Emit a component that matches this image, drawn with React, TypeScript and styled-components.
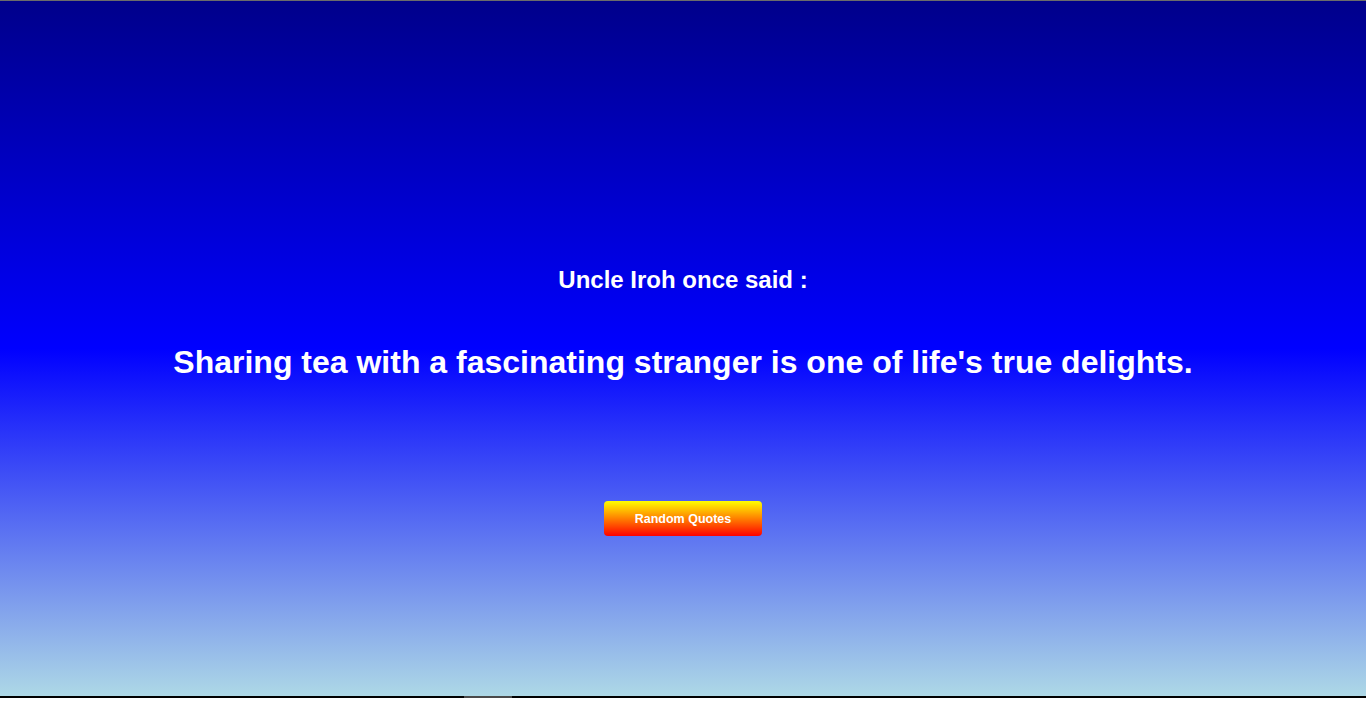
import React from "react";
import styled, { createGlobalStyle } from "styled-components";

const Global = createGlobalStyle`
  html, body { margin: 0; padding: 0; background: #ffffff; }
  body { font-family: "Liberation Sans", Arial, sans-serif; }
`;

const Page = styled.div`
  height: 696px;
  border-top: 1px solid #6b6b6b;
  background: linear-gradient(#00008b, #0000ff, #add8e6);
  display: flex;
  flex-direction: column;
  align-items: center;
  color: #ffffff;
  box-sizing: border-box;
  padding-top: 265px;
`;

const Heading = styled.h2`
  margin: 0;
  font-size: 24px;
  line-height: 28px;
  font-weight: bold;
`;

const Quote = styled.h1`
  margin: 50px 0 0;
  font-size: 32px;
  line-height: 37px;
  font-weight: bold;
  text-align: center;
`;

const Button = styled.button`
  margin-top: 120px;
  width: 158px;
  height: 35px;
  border: none;
  border-radius: 4px;
  background: linear-gradient(#ffff00, #ff0000);
  color: #ffffff;
  font-family: "Liberation Sans", Arial, sans-serif;
  font-size: 12.5px;
  font-weight: bold;
  cursor: pointer;
`;

const BottomBar = styled.div`
  height: 2px;
  background: #000000;
  display: flex;
`;

const Thumb = styled.span`
  margin-left: 464px;
  width: 48px;
  background: #4a4a4a;
`;

export default function App() {
  return (
    <>
      <Global />
      <Page>
        <Heading>Uncle Iroh once said :</Heading>
        <Quote>Sharing tea with a fascinating stranger is one of life's true delights.</Quote>
        <Button>Random Quotes</Button>
      </Page>
      <BottomBar>
        <Thumb />
      </BottomBar>
    </>
  );
}
